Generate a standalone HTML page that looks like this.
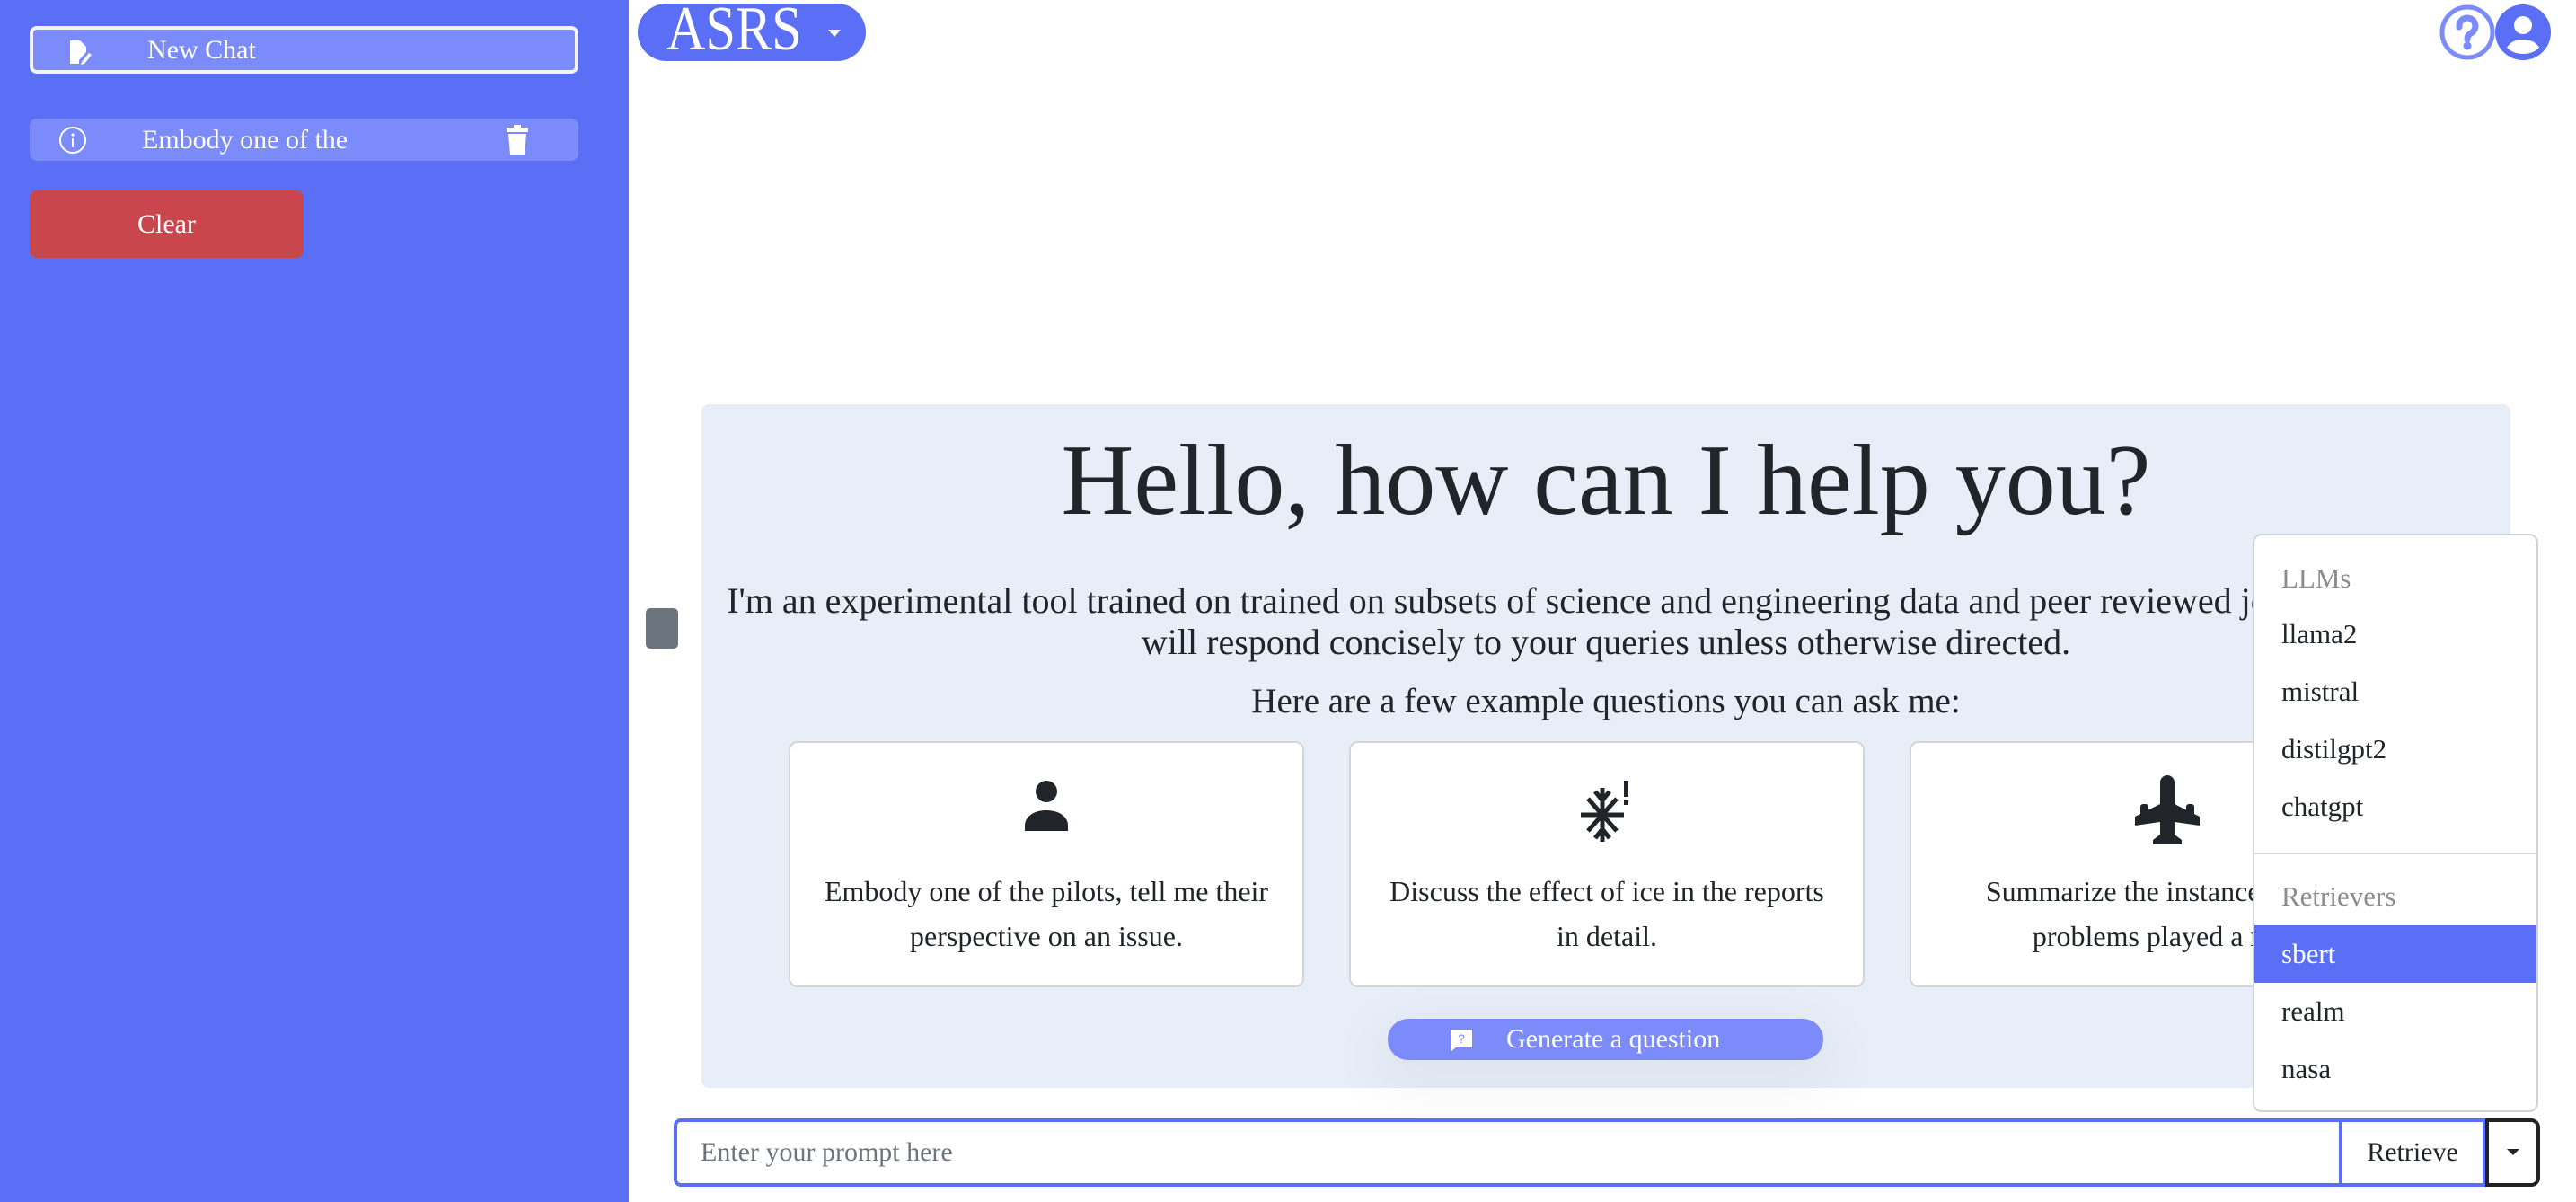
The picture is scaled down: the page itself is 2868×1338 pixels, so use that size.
<!DOCTYPE html>
<html><head><meta charset="utf-8"><style>
*{box-sizing:border-box;margin:0;padding:0}
body{width:2868px;height:1338px;overflow:hidden;background:#fff;font-family:"Liberation Serif",serif;color:#212529;position:relative}
.abs{position:absolute}
#side{left:0;top:0;width:700px;height:1338px;background:#5a6ff5}
.btn{position:absolute;color:#fff;font-size:30px;display:flex;align-items:center}
#hero{left:781px;top:450px;width:2014px;height:761px;background:#e8eef7;border-radius:8px}
.card{position:absolute;top:825px;width:574px;height:274px;background:#fff;border:2px solid #d3d5d8;border-radius:10px;text-align:center}
.card p{position:absolute;top:140px;left:0;right:0;font-size:32px;line-height:50px;white-space:nowrap}
.card svg{position:absolute;left:50%;transform:translateX(-50%);top:40px}
#dd{left:2508px;top:594px;width:318px;height:644px;background:#fff;border:2px solid #cfd2d6;border-radius:10px}
.it{position:absolute;left:0;right:0;height:64px;line-height:64px;padding-left:30px;font-size:31px;color:#212529}
.hd{color:#8c8c8c}
</style></head><body>
<div id="side" class="abs"></div>
<div class="btn" style="left:33px;top:29px;width:611px;height:53px;background:#7b8bfa;border:4px solid #f3f4fb;border-radius:8px">
<svg style="position:absolute;left:39px;top:10px" width="28" height="30" viewBox="0 0 28 30"><path d="M2 2h11l7 7v6l-8 9v4H2z" fill="#fff"/><path d="M15 26l8-10 3 2-8 10-4 1z" fill="#fff"/></svg>
<span style="position:absolute;left:127px">New Chat</span></div>
<div class="btn" style="left:33px;top:132px;width:611px;height:47px;background:#7b8bfa;border-radius:8px">
<svg style="position:absolute;left:32px;top:8px" width="32" height="32" viewBox="0 0 32 32"><circle cx="16" cy="16" r="14" fill="none" stroke="#fff" stroke-width="2"/><circle cx="16" cy="10" r="1.6" fill="#fff"/><rect x="15" y="14" width="2" height="10" fill="#fff"/></svg>
<span style="position:absolute;left:125px">Embody one of the</span>
<svg style="position:absolute;left:530px;top:7px" width="26" height="34" viewBox="0 0 26 34"><rect x="9" y="0" width="8" height="4" fill="#fff"/><rect x="1" y="3" width="24" height="5" rx="1" fill="#fff"/><path d="M3 10h20l-2 23H5z" fill="#fff"/></svg></div>
<div class="btn" style="left:33px;top:212px;width:305px;height:75px;background:#c9464c;border-radius:8px;justify-content:center">Clear</div>

<div class="abs" style="left:710px;top:4px;width:254px;height:64px;background:#5a6ff5;border-radius:32px;color:#fff;font-size:70px;line-height:64px"><span style="position:absolute;left:32px;top:-3px;transform:scaleX(.86);transform-origin:left">ASRS</span>
<svg style="position:absolute;left:212px;top:29px" width="14" height="9"><path d="M0 0h14L7 8z" fill="#fff"/></svg></div>

<svg class="abs" style="left:2716px;top:4px" width="128" height="64" viewBox="0 0 128 64">
<circle cx="31" cy="32" r="28" fill="none" stroke="#7b8bfa" stroke-width="5"/>
<path d="M22 26a9 9 0 1 1 13 7c-3 2-4 3-4 7" fill="none" stroke="#7b8bfa" stroke-width="7" stroke-linecap="round"/><circle cx="31" cy="47" r="4.5" fill="#7b8bfa"/>
<circle cx="93" cy="32" r="31" fill="#5a6ff5"/><circle cx="93" cy="24" r="10" fill="#fff"/><path d="M75 49c4-7 11-9 18-9s14 2 18 9c-5 5-11 7-18 7s-13-2-18-7z" fill="#fff"/></svg>

<div id="hero" class="abs"></div>
<div class="abs" style="left:781px;top:470px;width:2014px;text-align:center;font-size:112px;line-height:130px">Hello, how can I help you?</div>
<div class="abs" style="left:781px;top:646px;width:2014px;text-align:center;font-size:40px;line-height:46px;white-space:nowrap">I'm an experimental tool trained on trained on subsets of science and engineering data and peer reviewed journal articles. I<br>will respond concisely to your queries unless otherwise directed.</div>
<div class="abs" style="left:781px;top:758px;width:2014px;text-align:center;font-size:39px;line-height:46px">Here are a few example questions you can ask me:</div>
<div class="abs" style="left:719px;top:677px;width:36px;height:45px;background:#6c757d;border-radius:5px"></div>

<div class="card" style="left:878px"><svg width="60" height="60" viewBox="0 0 60 60" style="top:40px"><circle cx="30" cy="14" r="12" fill="#212529"/><path d="M6 58v-6c0-10 10-17 24-17s24 7 24 17v6z" fill="#212529"/></svg><p>Embody one of the pilots, tell me their<br>perspective on an issue.</p></div>
<div class="card" style="left:1502px"><svg width="70" height="70" viewBox="0 0 70 70" style="top:42px"><g stroke="#212529" stroke-width="5" fill="none"><path d="M30 8v60M6 38h48M14 20l32 36M46 20L14 56M22 12l8 10 8-10M22 64l8-10 8 10"/></g><rect x="54" y="0" width="5" height="18" fill="#212529"/><rect x="54" y="22" width="5" height="5" fill="#212529"/></svg><p>Discuss the effect of ice in the reports<br>in detail.</p></div>
<div class="card" style="left:2126px"><svg width="84" height="84" viewBox="0 0 84 84" style="top:34px"><path d="M34 10a8 8 0 0 1 16 0v24l28 14v10l-28-4v14l8 6v5H26v-5l8-6V54L6 58V48l28-14z" fill="#212529"/><rect x="12" y="34" width="9" height="22" rx="3" fill="#212529"/><rect x="63" y="34" width="9" height="22" rx="3" fill="#212529"/></svg><p>Summarize the instances where<br>problems played a role.</p></div>

<div class="abs" style="left:1545px;top:1134px;width:485px;height:46px;border-radius:23px;box-shadow:0 20px 60px 20px rgba(0,0,0,.04)"></div>
<div class="btn" style="left:1545px;top:1134px;width:485px;height:46px;background:#7b8bfa;border-radius:23px">
<svg style="position:absolute;left:68px;top:10px" width="28" height="28" viewBox="0 0 28 28"><path d="M2 2h24v20H8l-6 5z" fill="#fff"/><text x="14" y="17" font-size="14" text-anchor="middle" fill="#7b8bfa" font-family="Liberation Sans">?</text></svg>
<span style="position:absolute;left:132px">Generate a question</span></div>

<div class="abs" style="left:750px;top:1245px;width:1858px;height:76px;border:4px solid #5a6ff5;border-radius:8px 0 0 8px;background:#fff;font-size:30px;color:#6c757d;line-height:68px;padding-left:26px">Enter your prompt here</div>
<div class="abs" style="left:2604px;top:1245px;width:164px;height:76px;border:4px solid #5a6ff5;background:#fff;font-size:30px;line-height:68px;text-align:center">Retrieve</div>
<div class="abs" style="left:2767px;top:1245px;width:61px;height:76px;border:4px solid #222;border-radius:0 10px 10px 0;background:#fff"><svg style="position:absolute;left:20px;top:30px" width="14" height="8"><path d="M0 0h14L7 7z" fill="#212529"/></svg></div>

<div id="dd" class="abs">
<div class="it hd" style="top:16px">LLMs</div>
<div class="it" style="top:78px">llama2</div>
<div class="it" style="top:142px">mistral</div>
<div class="it" style="top:206px">distilgpt2</div>
<div class="it" style="top:270px">chatgpt</div>
<div class="abs" style="left:0;right:0;top:353px;height:2px;background:#d8dadd"></div>
<div class="it hd" style="top:370px">Retrievers</div>
<div class="it" style="top:434px;height:64px;background:#5a6ff5;color:#fff">sbert</div>
<div class="it" style="top:498px">realm</div>
<div class="it" style="top:562px">nasa</div>
</div>
</body></html>
